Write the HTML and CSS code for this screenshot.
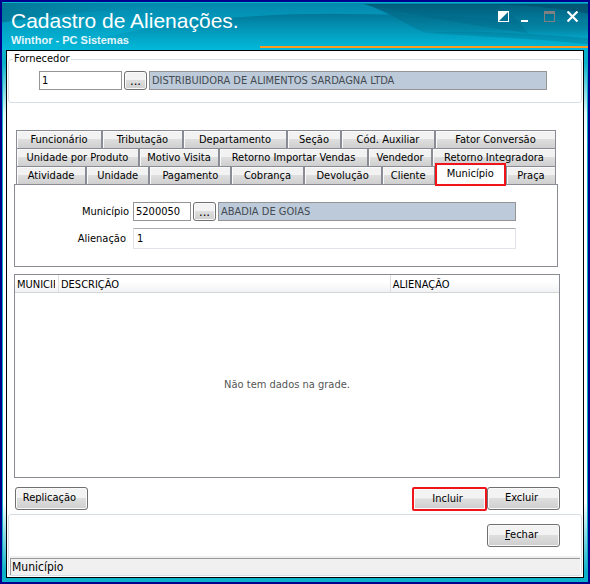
FILE: index.html
```html
<!DOCTYPE html>
<html lang="pt-BR">
<head>
<meta charset="utf-8">
<meta name="viewport" content="width=device-width, initial-scale=1">
<title>Cadastro de Alienações</title>
<link rel="stylesheet" href="styles.css">
</head>
<body>
<div class="window">
  <header class="titlebar">
    <svg class="waves" viewBox="0 0 586 48" preserveAspectRatio="none" aria-hidden="true">
      <defs>
        <linearGradient id="base" x1="0" y1="0" x2="0" y2="1">
          <stop offset="0" stop-color="#0487ac"/><stop offset="1" stop-color="#02bbdb"/>
        </linearGradient>
        <linearGradient id="shade" x1="0" y1="0" x2="0" y2="1">
          <stop offset="0" stop-color="#025f7e"/><stop offset="0.7" stop-color="#04809f" stop-opacity="0.7"/><stop offset="1" stop-color="#04a0c2" stop-opacity="0.2"/>
        </linearGradient>
        <linearGradient id="band" x1="0" y1="0" x2="0" y2="1">
          <stop offset="0" stop-color="#027798"/><stop offset="1" stop-color="#04a9cc" stop-opacity="0.1"/>
        </linearGradient>
        <linearGradient id="corner" x1="0" y1="0" x2="1" y2="0">
          <stop offset="0" stop-color="#04708f" stop-opacity="0.7"/><stop offset="1" stop-color="#04a0c4" stop-opacity="0"/>
        </linearGradient>
      </defs>
      <rect width="586" height="48" fill="url(#base)"/>
      <path d="M0 0H260C170 2 70 8 0 20Z" fill="url(#corner)"/>
      <path d="M90 38C160 20 240 11 330 11L400 12L586 20V48H40Z" fill="url(#band)"/>
      <path d="M362 1C385 8 400 20 422 30C470 30 530 34 586 38V1Z" fill="url(#shade)"/>
      <path d="M365 1H492C505 7 518 18 526 31C480 24 420 15 365 1Z" fill="#015673" fill-opacity="0.2"/>
      <path d="M492 1C540 3 570 7 586 11V1Z" fill="#014c69" fill-opacity="0.6"/>
      <path d="M422 30C480 28 540 32 586 36V42C530 36 470 34 422 30Z" fill="#027594" fill-opacity="0.4"/>
    </svg>
    <div class="titles">
      <h1>Cadastro de Alienações.</h1>
      <p>Winthor - PC Sistemas</p>
    </div>
    <div class="window-controls">
      <button type="button" aria-label="Recolher"><svg width="11" height="11" viewBox="0 0 11 11"><path d="M0 0H11V11H0Z" fill="#fff"/><path d="M10 1V10H1Z" fill="#04708f"/></svg></button>
      <button type="button" aria-label="Minimizar"><svg width="11" height="11" viewBox="0 0 11 11"><path d="M0 9H7V11H0Z" fill="#fff"/></svg></button>
      <button type="button" aria-label="Maximizar" disabled><svg width="11" height="11" viewBox="0 0 11 11"><path d="M0 0H11V11H0ZM1 3V10H10V3Z" fill="#808080" fill-rule="evenodd"/></svg></button>
      <button type="button" aria-label="Fechar janela"><svg width="11" height="11" viewBox="0 0 11 11"><path d="M0.500 0.500L10.500 10.500M10.500 0.500L0.500 10.500" stroke="#fff" stroke-width="2.200"/></svg></button>
    </div>
    <div class="accent"></div>
  </header>

  <main class="client">
    <fieldset class="supplier">
      <legend>Fornecedor</legend>
      <div class="lookup">
        <input class="field code-wide" type="text" value="1" aria-label="Código do fornecedor">
        <button class="btn browse" type="button" aria-label="Buscar fornecedor">...</button>
        <input class="field name" type="text" value="DISTRIBUIDORA DE ALIMENTOS SARDAGNA LTDA" aria-label="Nome do fornecedor" readonly>
      </div>
    </fieldset>

    <div class="tabs" role="tablist">
      <div class="tab-row row-a">
        <button type="button" role="tab">Funcionário</button><button type="button" role="tab">Tributação</button><button type="button" role="tab">Departamento</button><button type="button" role="tab">Seção</button><button type="button" role="tab">Cód. Auxiliar</button><button type="button" role="tab">Fator Conversão</button>
      </div>
      <div class="tab-row row-b">
        <button type="button" role="tab">Unidade por Produto</button><button type="button" role="tab">Motivo Visita</button><button type="button" role="tab">Retorno Importar Vendas</button><button type="button" role="tab">Vendedor</button><button type="button" role="tab">Retorno Integradora</button>
      </div>
      <div class="tab-row row-c">
        <button type="button" role="tab">Atividade</button><button type="button" role="tab">Unidade</button><button type="button" role="tab">Pagamento</button><button type="button" role="tab">Cobrança</button><button type="button" role="tab">Devolução</button><button type="button" role="tab">Cliente</button><button class="active" type="button" role="tab" aria-selected="true">Município</button><button type="button" role="tab">Praça</button>
      </div>
    </div>

    <section class="panel" role="tabpanel" aria-label="Município">
      <div class="form-row">
        <label for="municipio">Município</label>
        <div class="lookup">
          <input class="field code" id="municipio" type="text" value="5200050">
          <button class="btn browse" type="button" aria-label="Buscar município">...</button>
          <input class="field name" type="text" value="ABADIA DE GOIAS" aria-label="Nome do município" readonly>
        </div>
      </div>
      <div class="form-row">
        <label class="inset" for="alienacao">Alienação</label>
        <input class="field soft" id="alienacao" type="text" value="1">
      </div>
    </section>

    <div class="grid">
      <table>
        <colgroup><col class="col-code"><col class="col-desc"><col class="col-last"></colgroup>
        <thead><tr><th><div class="clip">MUNICIPIO</div></th><th>DESCRIÇÃO</th><th>ALIENAÇÃO</th></tr></thead>
      </table>
      <p class="empty">Não tem dados na grade.</p>
    </div>

    <div class="actions">
      <button class="btn" type="button">Replicação</button>
      <div class="group">
        <button class="btn marked" type="button">Incluir</button>
        <button class="btn" type="button">Excluir</button>
      </div>
    </div>

    <footer class="footer">
      <div class="close-row"><button class="btn" type="button"><u>F</u>echar</button></div>
      <div class="status">Município</div>
    </footer>
  </main>
</div>
</body>
</html>
```

FILE: styles.css
```css
* { box-sizing: border-box; }

body {
  margin: 0;
  min-height: 100vh;
  display: flex;
  padding: 2px;
  background: #00008c;
  color: #000;
  font: 11px/14px "DejaVu Sans Condensed", "DejaVu Sans", sans-serif;
}

button, input { font: inherit; color: inherit; margin: 0; }

.window {
  flex: 1;
  min-width: 0;
  display: flex;
  flex-direction: column;
  padding: 0 4px 4px;
  border-top: 1px solid #08b4cc;
  background:
    linear-gradient(#0ab1c8, #0ab1c8) left / 1px 100% no-repeat,
    linear-gradient(#0ab1c8, #0ab1c8) right / 1px 100% no-repeat,
    linear-gradient(#0ab1c8, #0ab1c8) bottom / 100% 4px no-repeat,
    linear-gradient(#0ab1c8 60px, #dff8fa 110px, #fff 140px, #fff calc(100% - 80px), #0ab1c8 calc(100% - 10px));
}

.titlebar {
  position: relative;
  display: flex;
  justify-content: space-between;
  height: 47px;
  margin: 0 -4px;
  padding: 6px 10px 0 9px;
  color: #fff;
  font-family: "Liberation Sans", Arial, sans-serif;
}
.waves { position: absolute; inset: 0; width: 100%; height: 100%; }
.titles, .window-controls { position: relative; }
.titles h1 { margin: 0; font-size: 21px; line-height: 24px; font-weight: 400; }
.titles p { margin: 0; font-size: 11px; line-height: 14px; font-weight: 700; color: #e4f6fb; }
.window-controls { display: flex; align-items: flex-start; gap: 12px; padding-top: 2px; }
.window-controls button { display: block; padding: 0; border: 0; background: none; line-height: 0; }
.accent { position: absolute; left: 44%; right: 0; bottom: 2px; height: 2px; background: #fb9a1c; }

.client {
  flex: 1;
  display: flex;
  flex-direction: column;
  padding: 1px;
  border: 1px solid #000;
  background: #fff;
}

.supplier { margin: 0; padding: 5px 34px 12px 30px; border: 1px solid #d5dfe5; border-radius: 3px; }
.supplier legend { margin-left: -26px; padding: 0 1px; }

.lookup { display: flex; gap: 2px; flex: 1; min-width: 0; }
.field { height: 19px; min-width: 0; padding: 0 2px; border: 1px solid #959595; border-radius: 0; background: #fff; }
.code-wide { width: 83px; }
.code { width: 58px; }
.name { flex: 1; background: #bccad9; color: #444b52; }
.soft { flex: 1; height: 21px; padding: 0 3px; border-color: #abadb3 #e2e3ea #e2e3ea; border-radius: 1px; }

.btn {
  width: 73px;
  height: 23px;
  padding: 0 4px 1px 0;
  border: 1px solid #707070;
  border-radius: 3px;
  background: linear-gradient(#f3f3f3 0 45%, #dedede 50%, #cecece);
  box-shadow: inset 0 0 0 1px #fafafa;
}
.browse { width: 23px; height: 19px; padding: 0; font-size: 13px; }

.tabs { margin: 27px 26px 0 8px; }
.tab-row { display: grid; }
.row-a { grid-template-columns: 86fr 81fr 104fr 54fr 94fr 121fr; }
.row-b { grid-template-columns: 123fr 80fr 149fr 64fr 124fr; }
.row-c { grid-template-columns: 70fr 63fr 82fr 72fr 78fr 53fr 71fr 50fr; }
.tab-row button {
  min-width: 0;
  height: 18px;
  padding: 0;
  border: solid #898c95;
  border-width: 1px 1px 0 1px;
  background: linear-gradient(#f2f2f2 0 45%, #dedede 50%, #cfcfcf);
  box-shadow: inset 1px 1px #fafafa;
  white-space: nowrap;
}
.tab-row .active {
  position: relative;
  height: 23px;
  margin: -3px 0 -3px;
  padding-bottom: 2px;
  border: 2px solid #f0141a;
  background: #fff;
}

.panel { margin: 0 24px 0 6px; padding: 17px 41px 17px 0; border: 1px solid #898c95; display: grid; gap: 7px; }
.form-row { display: flex; align-items: center; }
.form-row label { width: 118px; padding-right: 4px; text-align: right; }
.form-row .inset { padding-right: 7px; }

.grid { flex: 1; min-height: 120px; display: flex; flex-direction: column; margin: 7px 22px 0 6px; border: 1px solid #898c95; }
.grid table { width: 100%; table-layout: fixed; border-collapse: separate; border-spacing: 0; }
.col-code { width: 44px; }
.col-desc { width: 61%; }
.grid th {
  height: 18px;
  padding: 2px 2px 0;
  overflow: hidden;
  text-align: left;
  font-weight: 400;
  white-space: nowrap;
  border-right: 1px solid #dedfe1;
  border-bottom: 1px solid #d5d5d5;
  background: linear-gradient(#fff 0 40%, #f1f2f4);
}
.grid th:last-child { border-right: 0; }
.clip { width: 38px; overflow: hidden; }
.empty { flex: 1; display: flex; align-items: center; justify-content: center; margin: 0; color: #555; }

.actions { display: flex; justify-content: space-between; align-items: flex-start; margin: 9px 22px 3px 7px; }
.group { display: flex; }
.marked { width: 75px; height: 24px; border: 2px solid #f0141a; border-radius: 2px; }

.footer { border: 1px solid #d5dfe5; border-radius: 3px; }
.close-row { display: flex; justify-content: flex-end; padding: 9px 21px 11px 0; }
.status { height: 17px; margin: 0 1px; padding: 1px; border: 1px solid #999; border-width: 1px 0 0 1px; background: #f0f0f0; box-shadow: 0 -2px #f0f0f0; font-size: 12px; line-height: 15px; }
```
